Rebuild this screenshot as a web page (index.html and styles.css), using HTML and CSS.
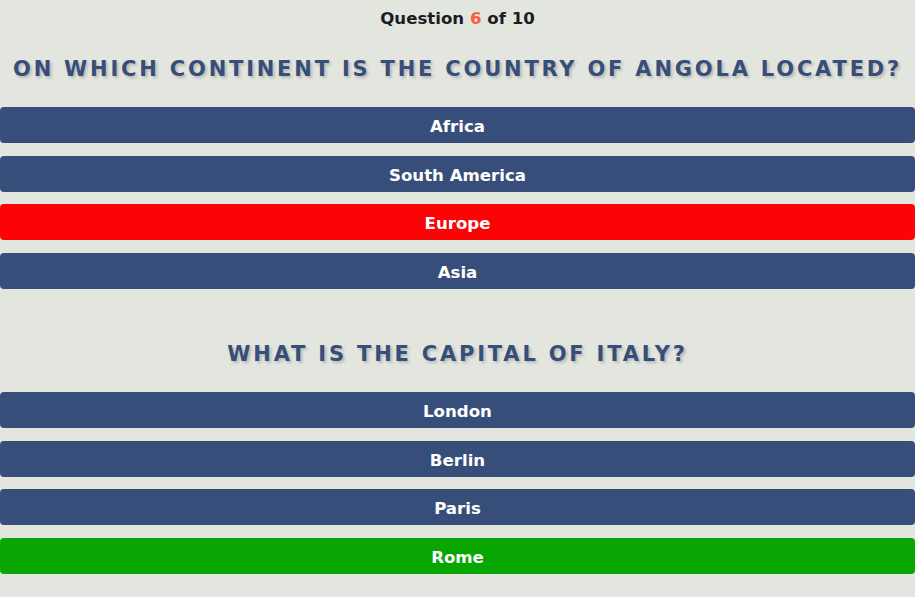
FILE: index.html
```html
<!DOCTYPE html>
<html>
<head>
<meta charset="utf-8">
<link rel="stylesheet" href="styles.css">
</head>
<body>
  <div class="counter">Question <span class="num">6</span> of 10</div>
  <div class="quiz">
    <section class="question">
      <h2 class="title">On which continent is the country of Angola located?</h2>
      <div class="answers">
        <div class="answer">Africa</div>
        <div class="answer">South America</div>
        <div class="answer wrong">Europe</div>
        <div class="answer">Asia</div>
      </div>
    </section>
    <section class="question">
      <h2 class="title">What is the capital of Italy?</h2>
      <div class="answers">
        <div class="answer">London</div>
        <div class="answer">Berlin</div>
        <div class="answer">Paris</div>
        <div class="answer right">Rome</div>
      </div>
    </section>
  </div>
</body>
</html>
```
FILE: styles.css
```css
html, body {
  margin: 0;
  padding: 0;
  background: #e3e5df;
}
body {
  font-family: "DejaVu Sans", "Open Sans", sans-serif;
  width: 915px;
  height: 597px;
  overflow: hidden;
}
.counter {
  margin-top: 9px;
  line-height: 20px;
  text-align: center;
  font-size: 16.6px;
  font-weight: bold;
  color: #1d1d1f;
}
.num {
  color: #ff5a3c;
}
.quiz {
  display: flex;
  flex-direction: column;
  gap: 49px;
  margin-top: 24px;
}
.question {
  display: flex;
  flex-direction: column;
  gap: 24px;
}
.title {
  margin: 0;
  height: 30px;
  line-height: 32px;
  text-align: center;
  text-transform: uppercase;
  font-size: 21px;
  font-weight: bold;
  letter-spacing: 2.8px;
  color: #374e7b;
  text-shadow: 2px 2px 3px rgba(0, 0, 0, 0.2);
}
.answers {
  display: flex;
  flex-direction: column;
}
.answer {
  height: 36px;
  line-height: 40px;
  border-radius: 4px;
  background: #374e7b;
  color: #ffffff;
  text-align: center;
  font-size: 16.6px;
  font-weight: bold;
}
.answer + .answer {
  margin-top: 12px;
}
.answer:nth-child(2),
.answer:nth-child(4) {
  margin-top: 13px;
}
.answer.wrong {
  background: #fc0306;
}
.answer.right {
  background: #07a603;
}
```
